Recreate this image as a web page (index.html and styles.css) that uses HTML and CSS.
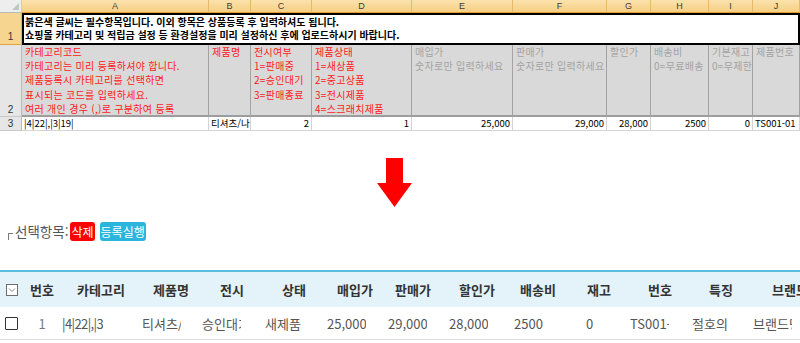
FILE: index.html
```html
<!DOCTYPE html>
<html lang="ko">
<head>
<meta charset="utf-8">
<title>상품 일괄등록</title>
<link rel="stylesheet" href="styles.css">
</head>
<body>
<div class="sheet">
  <div class="corner"><span class="tri"></span></div>
  <div class="colh">A</div>
  <div class="colh">B</div>
  <div class="colh">C</div>
  <div class="colh">D</div>
  <div class="colh">E</div>
  <div class="colh">F</div>
  <div class="colh">G</div>
  <div class="colh">H</div>
  <div class="colh">I</div>
  <div class="colh">J</div>

  <div class="rowh rowh-sel">1</div>
  <div class="note">붉은색 글씨는 필수항목입니다. 이외 항목은 상품등록 후 입력하셔도 됩니다.<br>쇼핑몰 카테고리 및 적립금 설정 등 환경설정을 미리 설정하신 후에 업로드하시기 바랍니다.</div>

  <div class="rowh">2</div>
  <div class="hd req">카테고리코드<br>카테고리는 미리 등록하셔야 합니다.<br>제품등록시 카테고리를 선택하면<br>표시되는 코드를 입력하세요.<br>여러 개인 경우 (,)로 구분하여 등록</div>
  <div class="hd req">제품명</div>
  <div class="hd req">전시여부<br>1=판매중<br>2=승인대기<br>3=판매종료</div>
  <div class="hd req">제품상태<br>1=새상품<br>2=중고상품<br>3=전시제품<br>4=스크래치제품</div>
  <div class="hd opt">매입가<br>숫자로만 입력하세요</div>
  <div class="hd opt">판매가<br>숫자로만 입력하세요</div>
  <div class="hd opt">할인가</div>
  <div class="hd opt">배송비<br>0=무료배송</div>
  <div class="hd opt">기본재고<br>0=무제한</div>
  <div class="hd opt">제품번호</div>

  <div class="rowh">3</div>
  <div class="cell">|4|22|,|3|19|</div>
  <div class="cell">티셔츠/나시</div>
  <div class="cell num">2</div>
  <div class="cell num">1</div>
  <div class="cell num">25,000</div>
  <div class="cell num">29,000</div>
  <div class="cell num">28,000</div>
  <div class="cell num">2500</div>
  <div class="cell num">0</div>
  <div class="cell">TS001-01</div>
</div>

<svg class="arrow" width="35" height="49" viewBox="0 0 35 49" aria-hidden="true">
  <polygon points="9,0 26,0 26,25 35,25 17.5,49 0,25 9,25" fill="#ff0000"/>
</svg>

<div class="toolbar">
  <span class="bracket"></span>
  <span class="label">선택항목:</span>
  <button class="btn btn-del">삭제</button>
  <button class="btn btn-reg">등록실행</button>
</div>

<div class="list-wrap">
  <table class="list">
    <colgroup>
      <col class="w24"><col class="w36"><col class="w82"><col class="w58"><col class="w64"><col class="w60"><col class="w62"><col class="w54"><col class="w74"><col class="w48"><col class="w64"><col class="w64"><col class="w62"><col class="w76">
    </colgroup>
    <thead>
      <tr>
        <th class="chk-h"><svg width="12" height="12" viewBox="0 0 12 12"><rect x="0.5" y="0.5" width="11" height="11" fill="#fff" stroke="#6e6e6e"/><polyline points="3,4.5 6,7.5 9,4.5" fill="none" stroke="#8a8a8a" stroke-width="1"/></svg></th>
        <th>번호</th>
        <th>카테고리</th>
        <th>제품명</th>
        <th>전시</th>
        <th>상태</th>
        <th>매입가</th>
        <th>판매가</th>
        <th>할인가</th>
        <th>배송비</th>
        <th class="shift10">재고</th>
        <th class="shift4">번호</th>
        <th>특징</th>
        <th>브랜드</th>
      </tr>
    </thead>
    <tbody>
      <tr>
        <td class="chk-d"><span class="box"></span></td>
        <td class="ctr idx">1</td>
        <td class="p2"><span class="clip tight">|4|22|,|3|19|</span></td>
        <td class="p0"><span class="clip">티셔츠/나시</span></td>
        <td class="p2"><span class="clip">승인대기</span></td>
        <td class="p1"><span class="clip">새제품</span></td>
        <td class="p3"><span class="clip">25,000</span></td>
        <td class="p2"><span class="clip">29,000</span></td>
        <td class="p9"><span class="clip">28,000</span></td>
        <td class="p0"><span class="clip">2500</span></td>
        <td class="p24"><span class="clip">0</span></td>
        <td class="p4"><span class="clip">TS001-01</span></td>
        <td class="p2"><span class="clip">절호의 찬스</span></td>
        <td class="p1"><span class="clip">브랜드명</span></td>
      </tr>
    </tbody>
  </table>
</div>
</body>
</html>
```

FILE: styles.css
```css
html, body {
  margin: 0;
  padding: 0;
  overflow: hidden;
  background: #fff;
}

body {
  width: 800px;
  font-family: "Noto Sans CJK KR", "Noto Sans", sans-serif;
}

/* ---------- spreadsheet ---------- */
.sheet {
  display: grid;
  grid-template-columns: 22px 187px 42px 61px 100px 101px 94px 44px 58px 44px 47px;
  grid-template-rows: 13px 32px 72px 14px;
  font-size: 10px;
  color: #000;
}

.sheet > div {
  box-sizing: border-box;
  overflow: hidden;
  white-space: nowrap;
}

.corner {
  background: #eeeeee;
  border-right: 1px solid #c9c9c9;
  border-bottom: 1px solid #b8b8b8;
  display: flex;
  justify-content: flex-end;
  align-items: flex-end;
  padding: 0 2px 2px 0;
}

.tri {
  width: 0;
  height: 0;
  border-left: 7px solid transparent;
  border-bottom: 7px solid #c4c4c4;
}

.colh {
  background: linear-gradient(#fbe2ad, #f6cf83);
  border-right: 1px solid #eab968;
  border-bottom: 1px solid #e39b2f;
  text-align: center;
  line-height: 12px;
  color: #3c3c3c;
  font-family: "Liberation Sans", sans-serif;
  font-size: 9px;
}

.rowh {
  background: #e6e6e6;
  border-right: 1px solid #b9b9b9;
  border-bottom: 1px solid #c8c8c8;
  display: flex;
  justify-content: center;
  align-items: flex-end;
  font-family: "Liberation Sans", sans-serif;
  font-size: 10px;
  line-height: 13px;
  color: #333;
}

.rowh-sel {
  background: #f6d590;
  border-bottom: 1px solid #e2a23c;
  padding-bottom: 1px;
}

.note {
  grid-column: 2 / -1;
  border: 2px solid #000;
  padding: 0 0 0 1px;
  font-weight: 700;
  line-height: 13px;
  letter-spacing: 0;
}

.hd {
  background: #d9d9d9;
  border-right: 1px solid #a3a3a3;
  border-bottom: 2px solid #9d9d9d;
  padding: 0 0 0 3px;
  line-height: 14.2px;
  letter-spacing: 0.3px;
}

.hd.req { color: #ff1a1a; }
.hd.opt { color: #a3a3a3; }

.cell {
  border-right: 1px solid #d4d4d4;
  border-bottom: 1px solid #d4d4d4;
  padding: 0 2px;
  line-height: 13px;
  font-size: 9.5px;
}

.cell.num { text-align: right; }

/* ---------- arrow ---------- */
.arrow {
  display: block;
  margin: 27px 0 0 377px;
}

/* ---------- toolbar ---------- */
.toolbar {
  display: flex;
  align-items: center;
  height: 19px;
  margin-top: 15px;
  padding-left: 8px;
  font-size: 13.5px;
  color: #555;
}

.bracket {
  width: 4px;
  height: 6px;
  border-top: 1px solid #7a7a7a;
  border-left: 1px solid #7a7a7a;
  margin-top: 9px;
  margin-right: 2px;
}

.label {
  line-height: 19px;
}

.btn {
  height: 19px;
  padding: 0 1px;
  border: 0;
  border-radius: 3px;
  color: #fff;
  font-family: "Noto Sans CJK KR", sans-serif;
  font-size: 12px;
  line-height: 19px;
  cursor: pointer;
}

.btn-del {
  background: #ff0000;
  margin-left: 2px;
}

.btn-reg {
  background: #2ab6dc;
  margin-left: 5px;
}

/* ---------- list table ---------- */
.list-wrap {
  width: 800px;
  overflow: hidden;
  margin-top: 29px;
  border-top: 2px solid #5bbfdf;
}

.list {
  width: 828px;
  table-layout: fixed;
  border-collapse: collapse;
  font-size: 13px;
}

.w24 { width: 24px; }
.w36 { width: 36px; }
.w82 { width: 82px; }
.w58 { width: 58px; }
.w64 { width: 64px; }
.w60 { width: 60px; }
.w62 { width: 62px; }
.w54 { width: 54px; }
.w74 { width: 74px; }
.w48 { width: 48px; }
.w76 { width: 76px; }

.list th {
  height: 35px;
  padding: 0;
  background: #e4f2fa;
  color: #333;
  font-weight: 700;
  text-align: center;
  white-space: nowrap;
}

.list th.shift10 { padding-left: 10px; }
.list th.shift4 { padding-left: 4px; }

.list th.chk-h {
  text-align: left;
  padding-left: 6px;
}

.chk-h svg { display: block; margin-top: 1px; }

.list td {
  height: 32px;
  padding: 0;
  color: #555;
  text-align: left;
  white-space: nowrap;
  border-bottom: 1px solid #dedede;
  overflow: hidden;
}

.clip {
  display: inline-block;
  width: 39px;
  overflow: hidden;
  vertical-align: middle;
}

.clip.tight {
  width: 41px;
  letter-spacing: -0.6px;
}

.list td.chk-d { padding-left: 5px; }

.box {
  display: block;
  width: 11px;
  height: 11px;
  border: 1px solid #333;
  background: #fff;
  border-radius: 1px;
}

.list td.ctr { text-align: center; }
.list td.idx { color: #777; }

.p0 { padding-left: 0; }
.list td.p1 { padding-left: 1px; }
.list td.p2 { padding-left: 2px; }
.list td.p3 { padding-left: 3px; }
.list td.p4 { padding-left: 4px; }
.list td.p9 { padding-left: 9px; }
.list td.p24 { padding-left: 24px; }
```
